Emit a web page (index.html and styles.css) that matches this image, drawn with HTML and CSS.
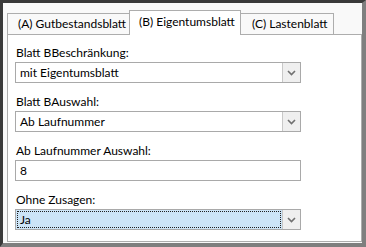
FILE: index.html
```html
<!DOCTYPE html>
<html lang="de">
<head>
    <meta charset="UTF-8">
    <title>Blatt Auswahl</title>
    <link rel="stylesheet" href="styles.css">
</head>
<body>
    <div class="window">
        <div class="tabs">
            <div class="tab tab-a">(A) Gutbestandsblatt</div>
            <div class="tab tab-b active">(B) Eigentumsblatt</div>
            <div class="tab tab-c">(C) Lastenblatt</div>
        </div>
        <div class="panel">
            <div class="field">
                <label>Blatt BBeschränkung:</label>
                <div class="combo">
                    <span class="value">mit Eigentumsblatt</span>
                    <span class="drop"><svg width="9" height="6" viewBox="0 0 9 6"><polyline points="1,1 4.5,4.5 8,1" fill="none" stroke="#707070" stroke-width="1.6"/></svg></span>
                </div>
            </div>
            <div class="field">
                <label>Blatt BAuswahl:</label>
                <div class="combo">
                    <span class="value">Ab Laufnummer</span>
                    <span class="drop"><svg width="9" height="6" viewBox="0 0 9 6"><polyline points="1,1 4.5,4.5 8,1" fill="none" stroke="#707070" stroke-width="1.6"/></svg></span>
                </div>
            </div>
            <div class="field">
                <label>Ab Laufnummer Auswahl:</label>
                <div class="textbox">8</div>
            </div>
            <div class="field last">
                <label>Ohne Zusagen:</label>
                <div class="combo focused">
                    <span class="value"><span class="focus-ring">Ja</span></span>
                    <span class="drop"><svg width="9" height="6" viewBox="0 0 9 6"><polyline points="1,1 4.5,4.5 8,1" fill="none" stroke="#707070" stroke-width="1.6"/></svg></span>
                </div>
            </div>
        </div>
    </div>
</body>
</html>
```
FILE: styles.css
```css
body {
    margin: 0;
    font-family: Lato, "Noto Sans", sans-serif;
    font-size: 12px;
    color: #000;
}
.window {
    width: 366px;
    height: 247px;
    box-sizing: border-box;
    border-left: 3px solid #3a3a3a;
    border-top: 3px solid #3a3a3a;
    border-right: 4px solid #7f7f7f;
    border-bottom: 4px solid #7f7f7f;
    background: #f9f9f9;
    padding: 7px 0 1px 4px;
    display: flex;
    flex-direction: column;
}
.tabs {
    display: flex;
    align-items: flex-end;
    height: 24px;
}
.tab {
    box-sizing: border-box;
    height: 21px;
    line-height: 20px;
    border: 1px solid #adadad;
    border-bottom: none;
    background: #f9f9f9;
    padding-left: 10px;
    white-space: nowrap;
}
.tab-a {
    width: 123px;
}
.tab-b {
    width: 112px;
    margin-left: -1px;
    border-left: none;
}
.tab-c {
    width: 94px;
    margin-left: -1px;
    padding-left: 11px;
}
.tab.active {
    height: 25px;
    line-height: 22px;
    background: #fff;
    border-left: 1px solid #adadad;
    padding-left: 9px;
    margin-bottom: -1px;
    position: relative;
    z-index: 1;
}
.panel {
    flex: 1;
    background: #fff;
    border: 1px solid #adadad;
    padding: 10px 0 0 7px;
}
.field {
    margin-bottom: 11px;
}
.field.last {
    margin-top: 4px;
}
.field label {
    display: block;
    height: 16px;
    line-height: 16px;
    padding-left: 1px;
    margin-bottom: 1px;
}
.combo, .textbox {
    box-sizing: border-box;
    width: 286px;
    height: 21px;
    border: 1px solid #a9a9a9;
    display: flex;
    background: #fff;
}
.textbox {
    padding-left: 4px;
    line-height: 19px;
}
.combo .value {
    flex: 1;
    padding-left: 4px;
    line-height: 19px;
}
.combo .drop {
    width: 17px;
    border-left: 1px solid #c8c8c8;
    background: #efefef;
    display: flex;
    align-items: center;
    justify-content: center;
}
.combo.focused .value {
    background: #cce4f7;
    padding: 1px;
}
.focus-ring {
    display: block;
    line-height: 15px;
    padding-left: 2px;
    border: 1px dotted #202020;
    box-sizing: border-box;
    height: 100%;
}
```
